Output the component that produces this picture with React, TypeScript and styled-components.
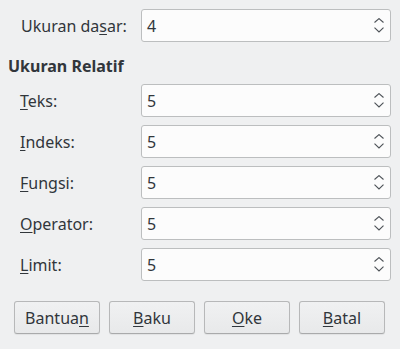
import React from 'react'
import styled, { createGlobalStyle } from 'styled-components'

const GlobalStyle = createGlobalStyle`
  html, body {
    margin: 0;
    padding: 0;
    background: #eff0f1;
  }
  body {
    font-family: "Noto Sans", "DejaVu Sans", sans-serif;
    font-size: 16px;
    color: #31363b;
  }
  u {
    text-underline-offset: 2px;
  }
`

const Dialog = styled.div`
  width: 400px;
  height: 349px;
  box-sizing: border-box;
  padding: 9px 9px 0 0;
  display: flex;
  flex-direction: column;
`

const FieldRow = styled.div<{ $indent: number }>`
  display: grid;
  grid-template-columns: ${(p) => 141 - p.$indent}px 250px;
  padding-left: ${(p) => p.$indent}px;
  align-items: center;
  height: 33px;
`

const Label = styled.span`
  line-height: 20px;
  white-space: nowrap;
`

const Heading = styled.div`
  font-weight: bold;
  line-height: 20px;
  padding-left: 8px;
  margin: 14px 0 8px;
`

const Rows = styled.div`
  display: flex;
  flex-direction: column;
  gap: 8px;
`

const SpinBox = styled.div`
  height: 33px;
  box-sizing: border-box;
  border: 1px solid #bcbebf;
  border-radius: 3px;
  background: #fcfcfc;
  display: flex;
  align-items: center;
  justify-content: space-between;
  padding: 0 5px 0 5px;
`

const Value = styled.span`
  line-height: 20px;
`

const Buttons = styled.div`
  display: flex;
  gap: 9px;
  padding-left: 14px;
  margin-top: 20px;
`

const Button = styled.button`
  width: 86px;
  height: 33px;
  box-sizing: border-box;
  border: 1px solid #b7b8b9;
  border-bottom-color: #a9aaab;
  border-radius: 3px;
  background: linear-gradient(#f0f1f2, #e8e9ea);
  box-shadow: 0 1px 1px rgba(0, 0, 0, 0.06);
  font-family: inherit;
  font-size: 16px;
  color: #31363b;
  padding: 0;
`

const Arrows = () => (
  <svg width="12" height="16" viewBox="0 0 12 16" fill="none" stroke="#4d5257" strokeWidth="1.1">
    <path d="M1.5 4.5 L6 0.6 L10.5 4.5" />
    <path d="M1.5 9.6 L6 14 L10.5 9.6" />
  </svg>
)

const Spin = ({ value }: { value: string }) => (
  <SpinBox>
    <Value>{value}</Value>
    <Arrows />
  </SpinBox>
)

const fields: [string, string][] = [
  ['T', 'eks:'],
  ['I', 'ndeks:'],
  ['F', 'ungsi:'],
  ['O', 'perator:'],
  ['L', 'imit:'],
]

const App: React.FC = () => {
  return (
    <>
      <GlobalStyle />
      <Dialog>
        <FieldRow $indent={21}>
          <Label>
            Ukuran da<u>s</u>ar:
          </Label>
          <Spin value="4" />
        </FieldRow>
        <Heading>Ukuran Relatif</Heading>
        <Rows>
          {fields.map(([key, rest]) => (
            <FieldRow $indent={20} key={key + rest}>
              <Label>
                <u>{key}</u>
                {rest}
              </Label>
              <Spin value="5" />
            </FieldRow>
          ))}
        </Rows>
        <Buttons>
          <Button>
            Bantua<u>n</u>
          </Button>
          <Button>
            <u>B</u>aku
          </Button>
          <Button>
            <u>O</u>ke
          </Button>
          <Button>
            <u>B</u>atal
          </Button>
        </Buttons>
      </Dialog>
    </>
  )
}

export default App
